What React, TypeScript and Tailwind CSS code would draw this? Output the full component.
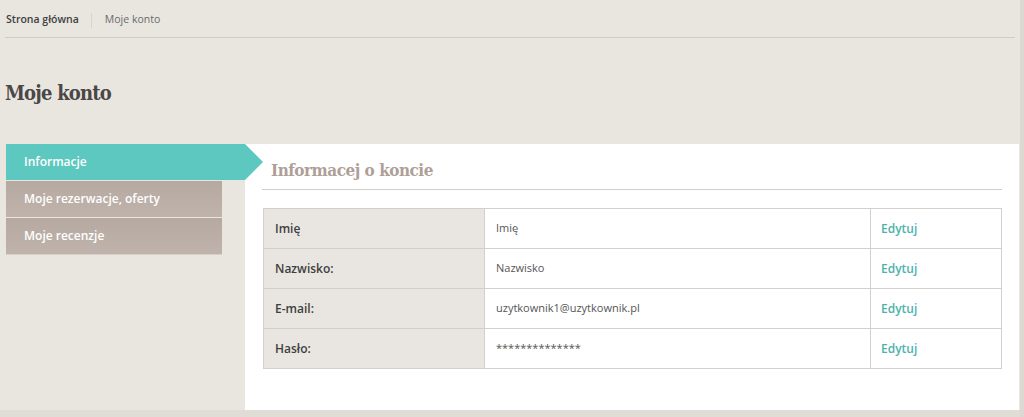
const rows = [
  { label: 'Imię', value: 'Imię' },
  { label: 'Nazwisko:', value: 'Nazwisko' },
  { label: 'E-mail:', value: 'uzytkownik1@uzytkownik.pl' },
  { label: 'Hasło:', value: '**************' },
];

const slab = { fontFamily: '"Roboto Slab", "DejaVu Serif Condensed", "DejaVu Serif", serif', fontStretch: 'condensed' };

export default function App() {
  return (
    <div className="w-[1024px] h-[417px] overflow-hidden bg-[#e9e6e0] font-['Open_Sans',sans-serif] flex">
      <div className="w-[1020px] flex flex-col">
        <div className="mx-[5px] h-[38px] border-b border-[#cfcbc6] flex items-center text-[10.5px] pt-[3px]">
          <span className="text-[#3f3f3f] font-semibold pl-[1px] pr-3">Strona główna</span>
          <span className="h-[15px] w-px bg-[#d8d4cf]" />
          <span className="text-[#6a6a6a] pl-[13px]">Moje konto</span>
        </div>
        <h1 className="mt-[42px] ml-[5px] text-[20px] leading-[26px] font-bold text-[#4a4746] tracking-[-0.8px]" style={slab}>
          Moje konto
        </h1>
        <div className="mt-[38px] flex flex-1">
          <div className="w-[239px] ml-[6px] flex flex-col text-[12px] font-semibold text-white">
            <div className="relative h-[36px] bg-[#5dc8c0] flex items-center pl-[18px] w-[239px]">
              Informacje
              <svg className="absolute left-[239px] top-0" width="19" height="36" viewBox="0 0 19 36">
                <polygon points="0,0 18,18 0,36" fill="#5dc8c0" />
              </svg>
            </div>
            <div className="mt-px h-[36px] w-[216px] bg-gradient-to-b from-[#b5a9a2] to-[#bfb3ab] flex items-center pl-[18px]">
              Moje rezerwacje, oferty
            </div>
            <div className="mt-px h-[37px] w-[216px] bg-gradient-to-b from-[#b5a9a2] to-[#bfb3ab] flex items-center pl-[18px] border-b border-[#d8cfc9]">
              Moje recenzje
            </div>
          </div>
          <div className="w-[774px] h-[266px] bg-white pl-[17px] pr-[17px] pt-[13px]">
            <h2 className="text-[17px] leading-[26px] font-bold text-[#ae9f99] pl-[9px] pb-[6px] border-b border-[#d2cfcb] tracking-[-0.5px]" style={slab}>
              Informacej o koncie
            </h2>
            <table className="mt-[18px] ml-px w-[739px] border-collapse text-[12px]">
              <tbody>
                {rows.map((r) => (
                  <tr key={r.label} className="h-[40px]">
                    <td className="w-[221px] bg-[#e9e6e1] border border-[#d3d0cc] pl-[11px] font-semibold text-[#3e3e3e]">
                      {r.label}
                    </td>
                    <td className="w-[386px] border border-[#d3d0cc] pl-[11px] text-[11px] text-[#555]">{r.value}</td>
                    <td className="border border-[#d3d0cc] pl-[10px] font-semibold text-[#4cb3ab]">Edytuj</td>
                  </tr>
                ))}
              </tbody>
            </table>
          </div>
        </div>
        <div className="h-[7px] bg-[#e0dcd6]" />
      </div>
      <div className="w-[4px] bg-[#dcd8d2]" />
    </div>
  );
}
